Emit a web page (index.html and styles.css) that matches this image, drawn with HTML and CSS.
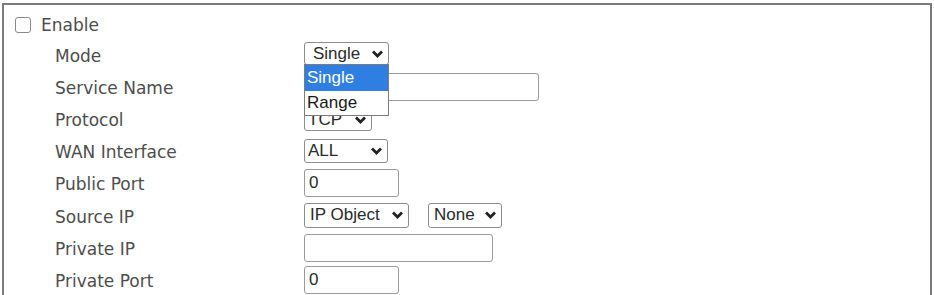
FILE: index.html
```html
<!DOCTYPE html>
<html lang="en">
<head>
    <meta charset="UTF-8">
    <title>Port Redirection</title>
    <link rel="stylesheet" href="styles.css">
</head>
<body>
    <div class="panel">
        <label class="enable">
            <input type="checkbox" class="check">
            <span>Enable</span>
        </label>

        <div class="form">
            <div class="label">Mode</div>
            <div class="field">
                <div class="picker open">
                    <div class="select w-mode">Single
                        <svg class="chev" viewBox="0 0 12 8"><path d="M1.5 1.5 L6 6 L10.5 1.5"/></svg>
                    </div>
                    <!-- open option list of the Mode select -->
                    <div class="options">
                        <div class="option active">Single</div>
                        <div class="option">Range</div>
                    </div>
                </div>
            </div>

            <div class="label">Service Name</div>
            <div class="field"><input class="text w-service" type="text"></div>

            <div class="label">Protocol</div>
            <div class="field">
                <div class="select w-proto">TCP
                    <svg class="chev" viewBox="0 0 12 8"><path d="M1.5 1.5 L6 6 L10.5 1.5"/></svg>
                </div>
            </div>

            <div class="label">WAN Interface</div>
            <div class="field">
                <div class="select w-wan">ALL
                    <svg class="chev" viewBox="0 0 12 8"><path d="M1.5 1.5 L6 6 L10.5 1.5"/></svg>
                </div>
            </div>

            <div class="label">Public Port</div>
            <div class="field"><input class="text w-port" type="text" value="0"></div>

            <div class="label">Source IP</div>
            <div class="field pair">
                <div class="select w-object">IP Object
                    <svg class="chev" viewBox="0 0 12 8"><path d="M1.5 1.5 L6 6 L10.5 1.5"/></svg>
                </div>
                <div class="select w-none">None
                    <svg class="chev" viewBox="0 0 12 8"><path d="M1.5 1.5 L6 6 L10.5 1.5"/></svg>
                </div>
            </div>

            <div class="label">Private IP</div>
            <div class="field"><input class="text w-ip" type="text"></div>

            <div class="label">Private Port</div>
            <div class="field"><input class="text w-port" type="text" value="0"></div>
        </div>
    </div>
</body>
</html>
```

FILE: styles.css
```css
body {
    margin: 0;
    background: #ffffff;
    font-family: "DejaVu Sans", Verdana, sans-serif;
    font-size: 17px;
    color: #4d4d4d;
    overflow: hidden;
}

.panel {
    margin: 3px 2px 0 2px;
    height: 300px;
    border: 2px solid #7a7a7a;
    border-bottom: none;
    padding-top: 3px;
}

.enable {
    display: flex;
    align-items: center;
    box-sizing: border-box;
    height: 31px;
    padding: 3px 0 0 11px;
    gap: 10px;
}

.check {
    appearance: none;
    -webkit-appearance: none;
    margin: 0;
    width: 16px;
    height: 16px;
    border: 1px solid #8a8a8a;
    border-radius: 3px;
    background: #ffffff;
}

.form {
    display: grid;
    grid-template-columns: 249px 1fr;
    grid-auto-rows: 32.1px;
    padding-left: 51px;
}

.label {
    display: flex;
    align-items: center;
    padding-top: 2px;
}

.field {
    display: flex;
    align-items: center;
}

.pair {
    gap: 19px;
}

.picker {
    position: relative;
    top: -2px;
}

.select {
    position: relative;
    box-sizing: border-box;
    height: 24px;
    border: 1px solid #8c8c8c;
    border-radius: 3px;
    padding-left: 5px;
    font-family: "Liberation Sans", Arial, sans-serif;
    font-size: 17px;
    line-height: 22px;
    color: #2a2a2a;
    background: #ffffff;
}

.chev {
    position: absolute;
    right: 4px;
    top: 7px;
    width: 13px;
    height: 8px;
    fill: none;
    stroke: #222222;
    stroke-width: 2.8;
}

.w-mode { width: 85px; padding-left: 8px; height: 23px; }
.w-proto { width: 68px; padding-left: 3px; height: 23px; }
.w-wan { width: 84px; padding-left: 3px; }
.w-object { width: 105px; height: 25px; }
.w-none { width: 74px; height: 25px; }

.options {
    position: absolute;
    left: 0;
    top: 22px;
    width: 85px;
    box-sizing: border-box;
    border: 1px solid #7c7c7c;
    background: #ffffff;
    font-family: "Liberation Sans", Arial, sans-serif;
    font-size: 17px;
    color: #1a1a1a;
    z-index: 2;
}

.option {
    height: 24px;
    line-height: 24px;
    padding-left: 2px;
}

.option.active {
    height: 26px;
    line-height: 26px;
    background: #2f7fe3;
    color: #ffffff;
}

.text {
    box-sizing: border-box;
    height: 28px;
    margin: 0;
    border: 1px solid #9a9a9a;
    border-radius: 3px;
    padding: 0 4px;
    font-family: "Liberation Sans", Arial, sans-serif;
    font-size: 17px;
    color: #2a2a2a;
    outline: none;
}

.w-service { width: 235px; }
.w-port { width: 95px; }
.w-ip { width: 189px; }
```
